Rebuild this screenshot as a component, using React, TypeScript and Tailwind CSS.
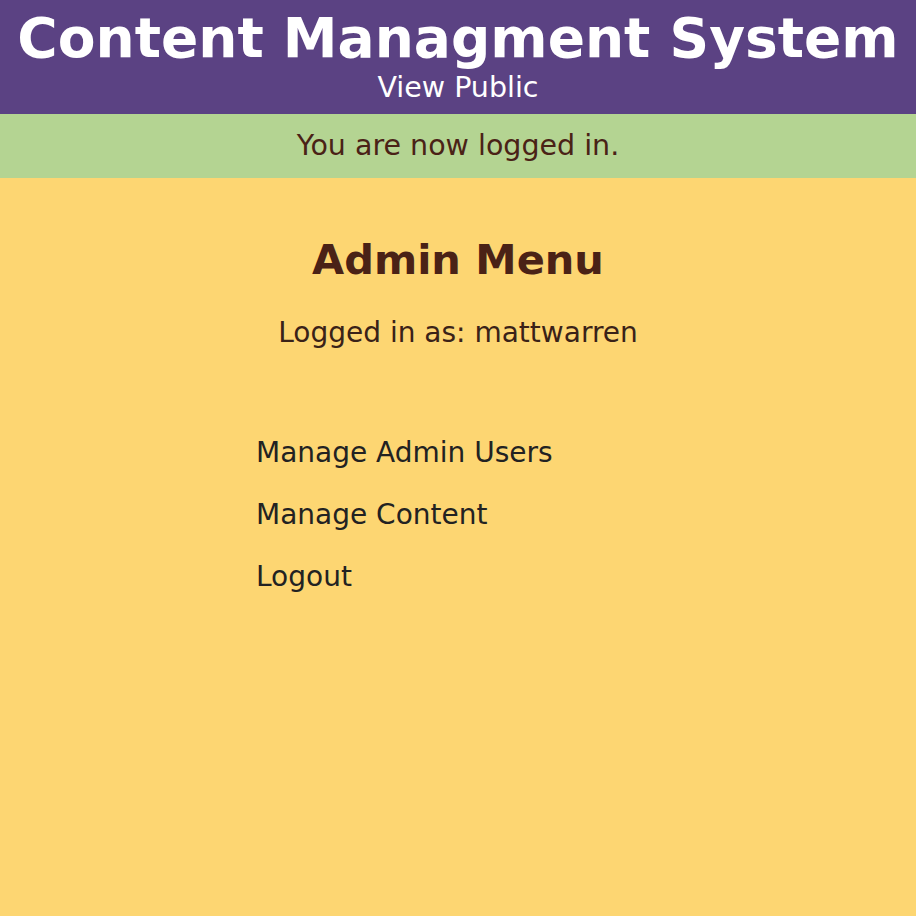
import React from "react";

export default function App() {
  return (
    <div className="min-h-[916px] bg-[#fdd672] flex flex-col" style={{ fontFamily: '"DejaVu Sans", Verdana, sans-serif' }}>
      <header className="bg-[#5b4283] h-[114px] flex flex-col items-center text-white">
        <h1 className="text-[55px] font-bold leading-[60px] mt-[8px] whitespace-nowrap">Content Managment System</h1>
        <a className="text-[28.5px] leading-[32px] mt-[4px]">View Public</a>
      </header>
      <div className="bg-[#b4d492] h-[64px] flex items-center justify-center text-[#4a2216] text-[28.5px] leading-[32px]">
        You are now logged in.
      </div>
      <main className="flex flex-col items-center">
        <h2 className="text-[41.5px] font-bold text-[#4a2216] mt-[58px] leading-[48px]">Admin Menu</h2>
        <p className="text-[28px] text-[#3a2218] mt-[33px] leading-[32px]">Logged in as: mattwarren</p>
        <ul className="w-[404px] mt-[88px] flex flex-col gap-[30px] text-[28px] text-[#222] leading-[32px]">
          <li>Manage Admin Users</li>
          <li>Manage Content</li>
          <li>Logout</li>
        </ul>
      </main>
    </div>
  );
}
